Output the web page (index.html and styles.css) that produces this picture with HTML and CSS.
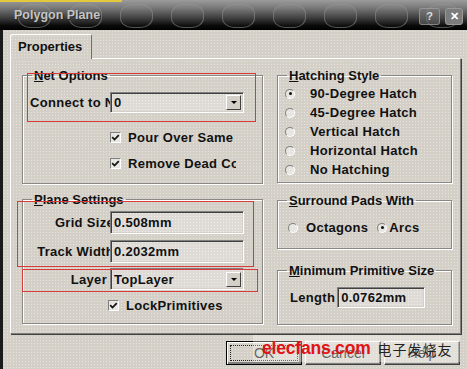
FILE: index.html
```html
<!DOCTYPE html>
<html lang="en">
<head>
    <meta charset="UTF-8">
    <title>Polygon Plane</title>
    <link rel="stylesheet" href="styles.css">
</head>
<body>
    <div class="window">
        <div class="titlebar">
            <div class="bubbles">
                <span></span><span></span><span></span><span></span><span></span>
                <span></span><span></span><span></span><span></span>
            </div>
            <span class="title">Polygon Plane</span>
            <div class="caption-btns">
                <span class="cbtn help">?</span>
                <span class="cbtn close">&#x2715;</span>
            </div>
        </div>
        <div class="frame">
            <div class="edge"></div>
            <div class="client">
                <div class="tabs"><div class="tab">Properties</div></div>
                <div class="page">
                    <div class="col col-left">
                        <fieldset class="group net">
                            <legend><u>N</u>et Options</legend>
                            <div class="row connect">
                                <span class="lbl lbl-clip">Connect to Net</span>
                                <div class="field combo"><span class="val">0</span><span class="drop"></span></div>
                            </div>
                            <div class="check pour">
                                <span class="box"><svg width="9" height="9" viewBox="0 0 9 9"><path d="M1.2 4.2 L3.5 6.6 L7.8 2.2" fill="none" stroke="#111" stroke-width="1.7"/></svg></span>
                                <span class="check-text">Pour Over Same Net</span>
                            </div>
                            <div class="check remove">
                                <span class="box"><svg width="9" height="9" viewBox="0 0 9 9"><path d="M1.2 4.2 L3.5 6.6 L7.8 2.2" fill="none" stroke="#111" stroke-width="1.7"/></svg></span>
                                <span class="check-text">Remove Dead Copper</span>
                            </div>
                        </fieldset>
                        <fieldset class="group plane">
                            <legend><u>P</u>lane Settings</legend>
                            <div class="row grid">
                                <span class="lbl lbl-right">Grid Size</span>
                                <div class="field edit"><span class="val">0.508mm</span></div>
                            </div>
                            <div class="row track">
                                <span class="lbl lbl-right">Track Width</span>
                                <div class="field edit"><span class="val">0.2032mm</span></div>
                            </div>
                            <div class="row layer">
                                <span class="lbl lbl-layer">Layer</span>
                                <div class="field combo"><span class="val">TopLayer</span><span class="drop"></span></div>
                            </div>
                            <div class="check lock">
                                <span class="box"><svg width="9" height="9" viewBox="0 0 9 9"><path d="M1.2 4.2 L3.5 6.6 L7.8 2.2" fill="none" stroke="#111" stroke-width="1.7"/></svg></span>
                                <span class="check-text">LockPrimitives</span>
                            </div>
                        </fieldset>
                    </div>
                    <div class="col col-right">
                        <fieldset class="group hatch">
                            <legend><u>H</u>atching Style</legend>
                            <div class="radio on"><span class="dot"></span><span>90-Degree Hatch</span></div>
                            <div class="radio"><span class="dot"></span><span>45-Degree Hatch</span></div>
                            <div class="radio"><span class="dot"></span><span>Vertical Hatch</span></div>
                            <div class="radio"><span class="dot"></span><span>Horizontal Hatch</span></div>
                            <div class="radio"><span class="dot"></span><span>No Hatching</span></div>
                        </fieldset>
                        <fieldset class="group pads">
                            <legend><u>S</u>urround Pads With</legend>
                            <div class="pads-row">
                                <div class="radio oct"><span class="dot"></span><span>Octagons</span></div>
                                <div class="radio on arcs"><span class="dot"></span><span>Arcs</span></div>
                            </div>
                        </fieldset>
                        <fieldset class="group minsize">
                            <legend><u>M</u>inimum Primitive Size</legend>
                            <div class="row length">
                                <span class="lbl">Length</span>
                                <div class="field edit short"><span class="val">0.0762mm</span></div>
                            </div>
                        </fieldset>
                    </div>
                </div>
                <div class="buttons">
                    <div class="btn default"><span class="focus">OK</span></div>
                    <div class="btn">Cancel</div>
                    <div class="btn">Help</div>
                </div>
            </div>
        </div>

        <!-- red annotation frames -->
        <div class="mark mark-net"></div>
        <div class="mark mark-plane"></div>
        <div class="mark mark-layer"></div>

        <div class="watermark">
            <span class="wm-site">elecfans.com</span>
            <span class="wm-cn">电子发烧友</span>
        </div>
    </div>
</body>
</html>
```

FILE: styles.css
```css
body {
    margin: 0;
    padding: 0;
    font-family: "Liberation Sans", Arial, sans-serif;
    font-size: 13px;
    font-weight: bold;
    color: #111;
}
.window {
    position: relative;
    width: 467px;
    height: 369px;
    overflow: hidden;
    display: flex;
    flex-direction: column;
    background: #d4d0c8 radial-gradient(circle, rgba(255,255,255,0.4) 0.6px, transparent 1px) 0 0 / 3px 3px;
}

/* title bar */
.titlebar {
    position: relative;
    height: 30px;
    flex: none;
    display: flex;
    align-items: center;
    padding: 0 4px 0 14px;
    background:
        linear-gradient(#e2c83a, #e2c83a) 0 0 / 122px 2px no-repeat,
        linear-gradient(#9c9c9c 0%, #7a7a7a 25%, #3c3c3c 60%, #0a0a0a 85%, #000 100%);
}
.bubbles {
    position: absolute;
    left: 18px;
    top: 4px;
    display: flex;
    gap: 18px;
}
.bubbles span {
    width: 31px;
    height: 22px;
    border-radius: 12px / 10px;
    border: 1px solid rgba(150,150,150,0.5);
    background: rgba(255,255,255,0.03);
}
.title {
    position: relative;
    color: #c4c4c4;
    font-size: 12.5px;
    text-shadow: 1px 1px 0 #2a2a2a;
}
.caption-btns {
    position: relative;
    margin-left: auto;
    display: flex;
    gap: 5px;
    margin-top: 2px;
}
.cbtn {
    height: 15px;
    border-radius: 3px;
    display: flex;
    align-items: center;
    justify-content: center;
    font-size: 11px;
}
.cbtn.help {
    width: 19px;
    background: rgba(120,120,120,0.5);
    border: 1px solid rgba(170,170,170,0.6);
    color: #ddd;
}
.cbtn.close {
    width: 16px;
    background: #7c7c7c;
    border: 1px solid #999;
    color: #fff;
}

/* body */
.frame {
    flex: 1;
    display: flex;
}
.edge {
    width: 3px;
    background: #1a1a1a;
}
.client {
    flex: 1;
    padding: 4px 6px 0 7px;
    display: flex;
    flex-direction: column;
    letter-spacing: 0.3px;
}
.tabs {
    display: flex;
    height: 24px;
}
.tab {
    position: relative;
    z-index: 1;
    width: 82px;
    height: 25px;
    box-sizing: border-box;
    border-top: 1px solid #fff;
    border-left: 1px solid #fff;
    border-right: 1px solid #6e6e6e;
    border-radius: 3px 2px 0 0;
    padding: 4px 0 0 7px;
    letter-spacing: 0;
    background: #d4d0c8 radial-gradient(circle, rgba(255,255,255,0.4) 0.6px, transparent 1px) 0 0 / 3px 3px;
}
.page {
    height: 276px;
    box-sizing: border-box;
    border-top: 1px solid #fff;
    border-left: 1px solid #fff;
    border-right: 1px solid #808080;
    border-bottom: 1px solid #808080;
    box-shadow: 1px 1px 0 #404040;
    padding: 9px 0 0 11px;
    display: flex;
    gap: 14px;
}
.col {
    display: flex;
    flex-direction: column;
}
.col-left { width: 241px; gap: 8px; }
.col-right { width: 175px; }

/* group boxes */
.group {
    margin: 0;
    padding: 0 0 0 7px;
    min-width: 0;
    box-sizing: border-box;
    border: 1px solid #8a8884;
    box-shadow: inset 1px 1px 0 #fff, 1px 1px 0 #fff;
}
.group legend {
    margin-left: 2px;
    padding: 0 2px;
    line-height: 15px;
    letter-spacing: 0;
}
.net { height: 116px; }
.plane { height: 132px; }
.hatch { height: 115px; }
.pads { height: 56px; margin-top: 10px; }
.minsize { height: 62px; margin-top: 14px; }

.row {
    display: flex;
    align-items: center;
}
.lbl {
    white-space: nowrap;
}
.lbl-clip {
    width: 80px;
    overflow: hidden;
}
.lbl-right {
    width: 84px;
    text-align: right;
    flex: none;
}
.lbl-layer {
    width: 77px;
    padding-right: 3px;
    text-align: right;
}

/* edit and combo fields */
.field {
    position: relative;
    box-sizing: border-box;
    display: flex;
    align-items: center;
    border-top: 1px solid #808080;
    border-left: 1px solid #808080;
    border-right: 1px solid #fff;
    border-bottom: 1px solid #fff;
    box-shadow: inset 1px 1px 0 #404040, inset -1px -1px 0 #d4d0c8;
    background: #dedbd6 radial-gradient(circle, rgba(255,255,255,0.5) 0.6px, transparent 1px) 0 0 / 3px 3px;
    padding-left: 3px;
}
.combo, .edit { width: 134px; }
.combo { height: 21px; }
.edit { height: 23px; margin-left: -4px; }
.edit.short { width: 88px; height: 21px; margin-left: 2px; }
.val {
    flex: 1;
    white-space: nowrap;
}
.drop {
    width: 15px;
    height: 15px;
    margin-right: 2px;
    box-sizing: border-box;
    border-top: 1px solid #fff;
    border-left: 1px solid #fff;
    border-right: 1px solid #404040;
    border-bottom: 1px solid #404040;
    background: #d4d0c8;
    display: flex;
    align-items: center;
    justify-content: center;
}
.drop::after {
    content: "";
    border-left: 3px solid transparent;
    border-right: 3px solid transparent;
    border-top: 3px solid #000;
}

.connect { margin-top: 9px; }
.grid { margin-top: 4px; }
.track { margin-top: 6px; }
.layer { margin-top: 5px; }
.layer .combo { height: 22px; }
.length { margin-top: 9px; margin-left: 5px; }

/* check boxes */
.check {
    display: flex;
    align-items: center;
    height: 16px;
    white-space: nowrap;
    overflow: hidden;
}
.box {
    flex: none;
    width: 11px;
    height: 11px;
    box-sizing: border-box;
    border-top: 1px solid #808080;
    border-left: 1px solid #808080;
    border-right: 1px solid #fff;
    border-bottom: 1px solid #fff;
    background: rgba(255,255,255,0.45);
    display: flex;
    align-items: center;
    justify-content: center;
    margin-right: 7px;
}
.pour { margin: 16px 0 0 80px; width: 126px; }
.remove { margin: 10px 0 0 80px; width: 126px; }
.lock { margin: 7px 0 0 78px; }

/* radio buttons */
.radio {
    display: flex;
    align-items: center;
    height: 19px;
    white-space: nowrap;
}
.dot {
    flex: none;
    width: 10px;
    height: 10px;
    box-sizing: border-box;
    border-radius: 50%;
    border: 1px solid;
    border-color: #808080 #fff #fff #808080;
    background: rgba(255,255,255,0.45);
    display: flex;
    align-items: center;
    justify-content: center;
    margin-right: 15px;
}
.radio.on .dot::after {
    content: "";
    width: 3px;
    height: 3px;
    border-radius: 50%;
    background: #111;
}
.hatch .radio:first-of-type { margin-top: 1px; }
.pads-row {
    display: flex;
    margin-top: 10px;
    height: 18px;
}
.oct { margin-left: 3px; }
.oct .dot { margin-right: 8px; }
.arcs { margin-left: 9px; }
.arcs .dot { margin-right: 2px; }

/* dialog buttons */
.buttons {
    display: flex;
    justify-content: flex-end;
    gap: 3px;
    margin-top: 7px;
    padding-right: 1px;
}
.btn {
    width: 76px;
    height: 24px;
    box-sizing: border-box;
    border-top: 1px solid #fff;
    border-left: 1px solid #fff;
    border-right: 1px solid #404040;
    border-bottom: 1px solid #404040;
    box-shadow: inset -1px -1px 0 #808080;
    display: flex;
    align-items: center;
    justify-content: center;
    font-weight: normal;
    font-size: 14px;
    letter-spacing: 0;
    color: #1a1a1a;
}
.btn.default {
    border: 1px solid #000;
    box-shadow: inset 1px 1px 0 #fff, inset -2px -2px 0 #808080;
    padding: 3px;
}
.focus {
    flex: 1;
    align-self: stretch;
    border: 1px dotted #222;
    display: flex;
    align-items: center;
    justify-content: center;
}

/* red annotation frames drawn over the dialog */
.mark {
    position: absolute;
    border: 1px solid #d83a3a;
    box-sizing: border-box;
}
.mark-net { left: 27px; top: 73px; width: 229px; height: 49px; }
.mark-plane { left: 17px; top: 201px; width: 237px; height: 66px; }
.mark-layer { left: 22px; top: 269px; width: 236px; height: 23px; }

/* site watermark */
.watermark {
    position: absolute;
    left: 253px;
    top: 335px;
    width: 207px;
    height: 27px;
    background: rgba(255,255,255,0.32);
    display: flex;
    align-items: center;
    padding-left: 9px;
    box-sizing: border-box;
}
.wm-site {
    color: #e01414;
    font-size: 17.5px;
    font-weight: bold;
    letter-spacing: -0.2px;
}
.wm-cn {
    margin-left: 7px;
    font-family: "Noto Sans CJK SC", sans-serif;
    font-size: 14px;
    font-weight: normal;
    color: #222;
    letter-spacing: 1px;
}
```
